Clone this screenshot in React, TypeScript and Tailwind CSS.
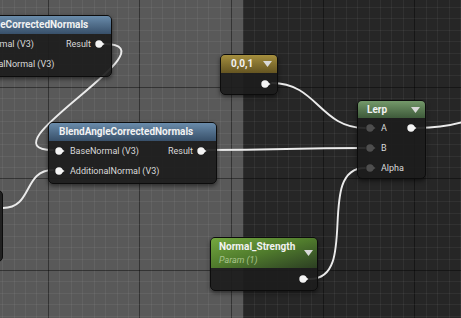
import React from "react"

const STEP = 11.45
const xs = Array.from({ length: 42 }, (_, k) => ({ k, p: Math.round(2.1 + STEP * k) + 0.5 }))
const ys = Array.from({ length: 29 }, (_, k) => ({ k, p: Math.round(6.7 + STEP * k) + 0.5 }))

const wires = [
    "M104 44 C180 44 -22 150 53 150",
    "M3 208 C33 208 23 170 53 170",
    "M207 150 C287 150 285 148 365 148",
    "M272 83 C317 83 320 128 365 128",
    "M310 279 C360 279 315 168 365 168",
    "M418 128 C450 128 470 122 520 100",
]

const Pin = ({ on = true }: { on?: boolean }) => (
    <svg width="10" height="8" viewBox="0 0 10 8" className="shrink-0">
        <circle cx="4" cy="4" r="3.7" fill={on ? "#f4f4f4" : "#4e4e4e"} />
        <path d="M6.8 2.2 L9.6 4 L6.8 5.8 Z" fill={on ? "#f4f4f4" : "#4e4e4e"} />
    </svg>
)

const Caret = () => (
    <svg width="9" height="6" viewBox="0 0 9 6" className="shrink-0">
        <path d="M0 0 H9 L4.5 6 Z" fill="#d9d9d9" />
    </svg>
)

const Canvas = () => (
    <svg width="461" height="318" className="absolute inset-0">
        <rect x="0" y="0" width="243" height="318" fill="#595959" />
        {xs.map(({ k, p }) => (
            <line key={"x" + k} x1={p} y1="0" x2={p} y2="318" stroke={k % 8 === 4 ? "rgba(0,0,0,0.42)" : "rgba(255,255,255,0.055)"} strokeWidth="1" />
        ))}
        {ys.map(({ k, p }) => (
            <line key={"y" + k} x1="0" y1={p} x2="461" y2={p} stroke={k % 8 === 7 ? "rgba(0,0,0,0.42)" : "rgba(255,255,255,0.055)"} strokeWidth="1" />
        ))}
        {wires.map((d, i) => (
            <path key={i} d={d} fill="none" stroke="#ebebeb" strokeWidth="1.9" strokeLinecap="round" />
        ))}
    </svg>
)

const FunctionNode = ({ className, right = "pr-[9px]" }: { className: string; right?: string }) => (
    <div className={`absolute w-[169px] rounded-[5px] border border-[#0c0c0c] bg-[#1c1c1c]/[0.92] shadow-[0_2px_4px_rgba(0,0,0,0.5)] overflow-hidden ${className}`}>
        <div className="h-[18px] flex items-center pl-[10px] bg-linear-to-b from-[#6a8cab] to-[#38506a] text-[10px] font-bold text-[#f2f2f2] leading-none">
            BlendAngleCorrectedNormals
        </div>
        <div className="flex flex-col pb-[2px] text-[9px] text-[#dadada] leading-none">
            <div className={`h-[20px] flex items-center justify-between pl-[6px] ${right}`}>
                <div className="flex items-center gap-[5px]"><Pin />BaseNormal (V3)</div>
                <div className="flex items-center gap-[4px]">Result<Pin /></div>
            </div>
            <div className="h-[20px] flex items-center pl-[6px]">
                <div className="flex items-center gap-[5px]"><Pin />AdditionalNormal (V3)</div>
            </div>
        </div>
    </div>
)

export default function App() {
    return (
        <div className="relative w-[461px] h-[318px] overflow-hidden bg-[#262626] font-[Roboto,sans-serif]">
            <Canvas />

            <div className="absolute left-[-97px] top-[190px] w-[100px] h-[72px] rounded-[5px] border border-[#0c0c0c] bg-[#1c1c1c]/[0.92]" />

            <FunctionNode className="left-[-57px] top-[15px]" right="pr-[6px]" />
            <FunctionNode className="left-[48px] top-[122px]" />

            <div className="absolute left-[220px] top-[54px] w-[58px] rounded-[5px] border border-[#0c0c0c] bg-[#1c1c1c]/[0.92] shadow-[0_2px_4px_rgba(0,0,0,0.5)] overflow-hidden">
                <div className="h-[18px] flex items-center justify-between pl-[10px] pr-[5px] bg-linear-to-b from-[#a58f3e] to-[#655522] text-[10px] font-bold text-[#f2f2f2] leading-none">
                    0,0,1<Caret />
                </div>
                <div className="h-[21px] flex items-center justify-end pr-[6px]"><Pin /></div>
            </div>

            <div className="absolute left-[357px] top-[100px] w-[69px] rounded-[5px] border border-[#0c0c0c] bg-[#1c1c1c]/[0.92] shadow-[0_2px_4px_rgba(0,0,0,0.5)] overflow-hidden">
                <div className="h-[17px] flex items-center justify-between pl-[9px] pr-[5px] bg-linear-to-b from-[#74996a] to-[#3e5a3a] text-[10px] font-bold text-[#f2f2f2] leading-none">
                    Lerp<Caret />
                </div>
                <div className="flex flex-col text-[9px] text-[#dadada] leading-none">
                    <div className="h-[20px] flex items-center justify-between pl-[8px] pr-[8px]">
                        <div className="flex items-center gap-[5px]"><Pin on={false} />A</div>
                        <Pin />
                    </div>
                    <div className="h-[20px] flex items-center gap-[5px] pl-[8px]"><Pin on={false} />B</div>
                    <div className="h-[20px] flex items-center gap-[5px] pl-[8px]"><Pin on={false} />Alpha</div>
                </div>
            </div>

            <div className="absolute left-[210px] top-[237px] w-[108px] rounded-[5px] border border-[#0c0c0c] bg-[#1c1c1c]/[0.92] shadow-[0_2px_4px_rgba(0,0,0,0.5)] overflow-hidden">
                <div className="h-[30px] flex items-center justify-between pl-[8px] pr-[4px] bg-linear-to-br from-[#74a93f] via-[#4f7a2c] to-[#2c3f22] leading-none">
                    <div className="flex flex-col gap-[4px]">
                        <span className="text-[10px] font-bold text-[#f2f2f2]">Normal_Strength</span>
                        <span className="text-[9px] italic text-[#a8c48c]">Param (1)</span>
                    </div>
                    <Caret />
                </div>
                <div className="h-[22px] flex items-center justify-end pr-[8px]"><Pin /></div>
            </div>
        </div>
    )
}
